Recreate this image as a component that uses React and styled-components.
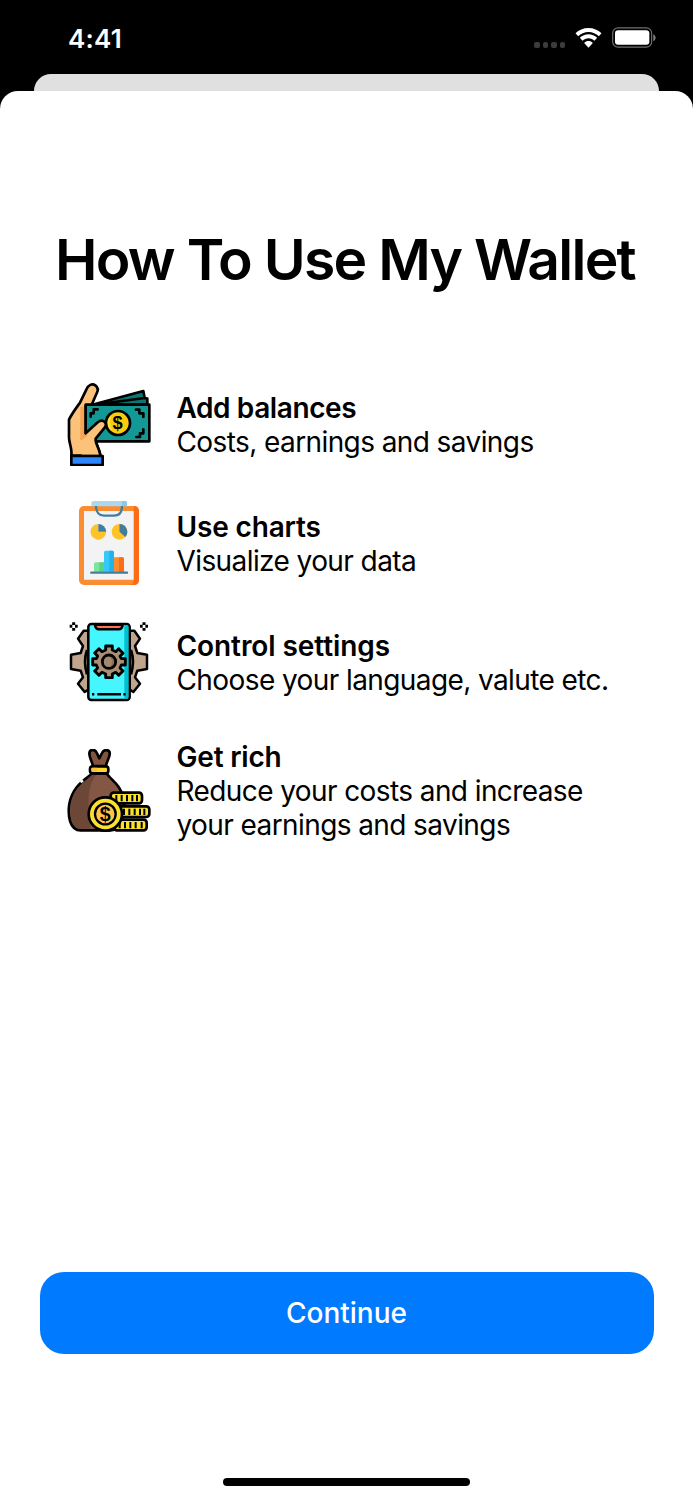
import React from "react";
import styled, { createGlobalStyle } from "styled-components";

const App = () => {
  return (
    <Screen>
      <GlobalStyle />
      <StatusBar>
        <Time>4:41</Time>
        <StatusIcons>
          <Signal>
            <span />
            <span />
            <span />
            <span />
          </Signal>
          <WifiIcon />
          <BatteryIcon />
        </StatusIcons>
      </StatusBar>
      <BackSheet />
      <Sheet>
        <Title>How To Use My Wallet</Title>
        <FeatureList>
          {features.map(({ title, lines, Icon, spacing }) => (
            <Feature key={title}>
              <Icon />
              <FeatureBody>
                <FeatureTitle $spacing={spacing}>{title}</FeatureTitle>
                {lines.map((line) => (
                  <FeatureText key={line}>{line}</FeatureText>
                ))}
              </FeatureBody>
            </Feature>
          ))}
        </FeatureList>
        <Footer>
          <ContinueButton type="button">Continue</ContinueButton>
          <HomeIndicator />
        </Footer>
      </Sheet>
    </Screen>
  );
};

const WifiIcon = () => (
  <Wifi viewBox="0 0 78 60">
    <path d="M39 0C54 0 68 6 78 16L70 25C62 17 51 12 39 12S16 17 8 25L0 16C10 6 24 0 39 0Z" />
    <path d="M39 19C49 19 58 23 65 29L57 38C52 34 46 31 39 31S26 34 21 38L13 29C20 23 29 19 39 19Z" />
    <path d="M39 39C44 39 48 41 52 45L39 59L26 45C30 41 34 39 39 39Z" />
  </Wifi>
);

const BatteryIcon = () => (
  <Battery viewBox="0 0 132 62">
    <rect x="2" y="2" width="117" height="58" rx="16" fill="none" stroke="#707070" strokeWidth="3.5" />
    <rect x="9" y="9" width="103" height="44" rx="9" fill="#fff" />
    <path d="M124 21C133 25 133 38 124 42Z" fill="#808080" />
  </Battery>
);

const MoneyIcon = () => (
  <Picture viewBox="21 20 252 252">
    <g stroke="#000" strokeWidth="8" strokeLinejoin="round" strokeLinecap="round">
      <path d="M97 88L250 47L254 68L262 70V88Z" fill="#0b7775" />
      <path d="M105 88L254 68" />
      <path d="M34 241C37 220 27 204 27 186V133C35 116 44 104 60 82L79 43C84 28 97 24 106 30C114 36 115 45 110 54L95 88V190H107C106 205 117 217 121 240Z" fill="#fdc27a" />
      <path d="M77 88H268V198H104L77 180Z" fill="#139995" />
      <path d="M92 124V114H101V102H113M228 103H238V114H250V125M229 185H240V174H250V162" fill="none" strokeWidth="8" />
      <circle cx="174" cy="143" r="36" fill="#f8ce0c" />
      <path d="M154 119A29 29 0 0 0 158 167C148 150 148 134 154 119Z" fill="#ffe14d" stroke="none" />
      <path d="M61 190L76 178L114 140C130 129 144 144 134 157L107 190C105 205 116 217 118 238H65Z" fill="#fdc27a" stroke="none" />
      <path d="M61 94H73V176L84 180L66 194H61Z" fill="#f7a552" stroke="none" />
      <path d="M77 92V174L114 140C129 129 144 143 134 157L107 190C105 205 117 216 121 239" fill="none" />
      <path d="M34 242H128V269H34Z" fill="#2c86ff" />
    </g>
    <Dollar x="173" y="162" $size={55}>$</Dollar>
  </Picture>
);

const ChartIcon = () => (
  <Picture viewBox="21 21 252 252">
    <rect x="57" y="36" width="180" height="237" rx="15" fill="#fa8d32" />
    <path d="M221 36H223C232 36 237 43 237 51V258C237 267 231 273 222 273H207C216 273 221 267 221 257Z" fill="#ff6c18" />
    <path d="M72 51H221V257H72Z" fill="#f3f3f4" />
    <path d="M94 27Q94 21 101 21H200V37H94Z" fill="#acd8ee" />
    <path d="M186 21H195Q201 21 201 27V37H186Z" fill="#8cc9e8" />
    <path d="M108 36C108 55 118 65 132 65H162C177 65 186 55 186 36" fill="none" stroke="#427d9e" strokeWidth="7" />
    <path d="M115 90A23.500 23.500 0 1 0 138.500 113.500H115Z" fill="#ffc328" />
    <path d="M115 90A23.500 23.500 0 0 1 138.500 113.500H115Z" fill="#427d9e" />
    <circle cx="178.500" cy="113.500" r="23.500" fill="#ffc328" />
    <path d="M178.500 90A23.500 23.500 0 0 1 196 129L178.500 113.500Z" fill="#427d9e" />
    <path d="M102 210Q102 205 107 205H132V233H102Z" fill="#7be59b" />
    <path d="M118 205H132V233H118Z" fill="#58d488" />
    <path d="M162 190H187Q192 190 192 195V233H162Z" fill="#fa8d32" />
    <path d="M177 190H187Q192 190 192 195V233H177Z" fill="#ff6c18" />
    <path d="M132 175Q132 170 137 170H157Q162 170 162 175V233H132Z" fill="#38c7fb" />
    <path d="M148 170H157Q162 170 162 175V233H148Z" fill="#20b3ec" />
    <path d="M94 236H201" stroke="#427d9e" strokeWidth="7" strokeLinecap="round" />
  </Picture>
);

const SettingsIcon = () => (
  <Picture viewBox="21 24 252 252">
    <g stroke="#000" strokeWidth="7.5" strokeLinejoin="round">
      <path d="M85 56H71L54 80L69 102L62 123L33 128V171L62 176L69 196L54 215L74 240L85 233Z" fill="#bfa58e" />
      <path d="M209 56H223L240 80L225 102L232 123L261 128V171L232 176L225 196L240 215L220 240L209 233Z" fill="#bfa58e" />
      <path d="M81 114C74 135 74 164 81 187M213 114C220 135 220 164 213 187" fill="none" strokeWidth="8" />
      <rect x="85" y="36" width="124" height="228" rx="9" fill="#46f6ff" />
      <path d="M193 40H202Q205 40 205 43V257Q205 260 202 260H193Z" fill="#00bfd0" stroke="none" />
      <path d="M105 38H188Q187 52 176 52H117Q106 52 105 38Z" fill="#ff7058" />
      <path d="M137 102H157V114L168 119L176 110L189 124L180 133L184 140H196V159H184L180 168L189 177L176 190L167 181L157 186V197H137V186L126 181L117 190L104 177L113 168L109 159H98V140H109L113 132L104 123L117 110L126 119L137 114Z" fill="#aa8f76" strokeWidth="8.5" />
      <circle cx="147" cy="149" r="20" fill="#917153" strokeWidth="8.5" />
      <path d="M148 134C158 138 158 160 148 164C136 165 132 159 132 149S137 133 148 134Z" fill="#a4886d" stroke="none" />
      <path d="M96 247H103M112 247H183M190 247H197" fill="none" />
      <path d="M41 31V39M41 48V56M29 43H37M45 43H53M252 31V39M252 48V56M240 43H248M256 43H264" fill="none" strokeWidth="9" />
    </g>
  </Picture>
);

const CoinStack = ({ x, y, width }) => (
  <g stroke="#000">
    <rect x={x} y={y} width={width} height="32" rx="9" fill="#f9e12e" strokeWidth="8" />
    <path
      d={[17, 33, 49, 65, width - 15].map((dx) => `M${x + dx} ${y + 7}v19`).join("")}
      strokeWidth="6"
    />
  </g>
);

const RichIcon = () => (
  <Picture viewBox="21 26 252 252">
    <g stroke="#000" strokeWidth="8" strokeLinejoin="round" strokeLinecap="round">
      <path d="M99 77C96 64 89 53 88 41C88 25 106 25 111 39L118 54L126 38C132 25 151 27 149 42C148 54 139 65 138 77Z" fill="#825440" />
      <path d="M96 99C77 119 39 134 28 190C23 224 28 270 62 270H152C185 270 198 218 192 178C184 133 151 118 140 99Z" fill="#845744" />
      <path d="M98 104C75 123 43 142 33 188C27 228 37 265 62 265H92C83 202 80 139 108 104Z" fill="#6c4738" stroke="none" />
      <rect x="90" y="78" width="55" height="21" rx="8" fill="#ffd82d" />
      <path d="M95 82H111V95H96Q92 88 95 82Z" fill="#ffc237" stroke="none" />
    </g>
    <CoinStack x={152} y={157} width={94} />
    <CoinStack x={175} y={198} width={93} />
    <CoinStack x={162} y={238} width={98} />
    <circle cx="136" cy="221" r="50" fill="#f9e12e" stroke="#000" strokeWidth="8" />
    <circle cx="136" cy="221" r="31" fill="#ffc44a" stroke="#000" strokeWidth="7" />
    <Dollar x="136" y="242" $size={59}>$</Dollar>
    <path d="M62 126L69 120" stroke="#fff" strokeWidth="7" />
  </Picture>
);

const features = [
  {
    title: "Add balances",
    lines: ["Costs, earnings and savings"],
    Icon: MoneyIcon,
    spacing: -0.4,
  },
  {
    title: "Use charts",
    lines: ["Visualize your data"],
    Icon: ChartIcon,
    spacing: -0.15,
  },
  {
    title: "Control settings",
    lines: ["Choose your language, valute etc."],
    Icon: SettingsIcon,
    spacing: -0.08,
  },
  {
    title: "Get rich",
    lines: ["Reduce your costs and increase", "your earnings and savings"],
    Icon: RichIcon,
    spacing: -0.2,
  },
];

const GlobalStyle = createGlobalStyle`
  * {
    box-sizing: border-box;
  }
  body {
    margin: 0;
    background: #000;
    font-family: Inter, "Liberation Sans", sans-serif;
  }
`;

const Screen = styled.main`
  display: flex;
  flex-direction: column;
  width: 693px;
  height: 1500px;
  overflow: hidden;
  color: #000;
  background: #000;
`;

const StatusBar = styled.header`
  display: flex;
  justify-content: space-between;
  flex: none;
  height: 74px;
  padding: 22px 37px 0 68px;
  color: #fff;
`;

const Time = styled.div`
  font-size: 26px;
  line-height: 33px;
  font-weight: 600;
  letter-spacing: 0.2px;
`;

const StatusIcons = styled.div`
  display: flex;
  align-items: flex-start;
`;

const Signal = styled.div`
  display: flex;
  gap: 3px;
  margin: 20px 10px 0 0;
  span {
    width: 5.5px;
    height: 6px;
    border-radius: 2px;
    background: #3c3c3c;
  }
`;

const Wifi = styled.svg`
  width: 27px;
  height: 20px;
  margin: 6px 10px 0 0;
  fill: #fff;
`;

const Battery = styled.svg`
  width: 44px;
  height: 21px;
  margin-top: 5px;
`;

const BackSheet = styled.div`
  flex: none;
  height: 17px;
  margin: 0 34px;
  border-radius: 17px 17px 0 0;
  background: #e0e0e0;
`;

const Sheet = styled.section`
  display: flex;
  flex: 1;
  flex-direction: column;
  padding-top: 134px;
  border-radius: 18px 18px 0 0;
  background: #fff;
`;

const Title = styled.h1`
  margin: 0;
  padding-right: 3px;
  font-size: 57px;
  line-height: 70px;
  font-weight: 600;
  letter-spacing: -1.72px;
  text-align: center;
  white-space: nowrap;
`;

const FeatureList = styled.div`
  display: flex;
  flex-direction: column;
  gap: 35px;
  padding: 87px 0 0 67px;
`;

const Feature = styled.div`
  display: flex;
  align-items: center;
  gap: 25.5px;
  min-height: 84px;
`;

const FeatureBody = styled.div`
  padding-top: 1px;
`;

const Picture = styled.svg`
  flex: none;
  width: 84px;
  height: 84px;
`;

const Dollar = styled.text`
  font-family: "Liberation Sans", sans-serif;
  font-size: ${(props) => props.$size}px;
  font-weight: 700;
  text-anchor: middle;
`;

const FeatureTitle = styled.h2`
  margin: 0;
  font-size: 28px;
  line-height: 34px;
  font-weight: 600;
  letter-spacing: ${(props) => props.$spacing}px;
`;

const FeatureText = styled.p`
  margin: 0;
  font-size: 28px;
  line-height: 34px;
  letter-spacing: -0.59px;
  white-space: nowrap;
`;

const Footer = styled.footer`
  display: flex;
  flex-direction: column;
  align-items: center;
  margin-top: auto;
  padding: 0 39px 14px;
`;

const ContinueButton = styled.button`
  width: 614px;
  height: 82px;
  padding: 0;
  border: none;
  border-radius: 24px;
  color: #fff;
  background: #007aff;
  font-family: inherit;
  font-size: 28px;
  font-weight: 500;
`;

const HomeIndicator = styled.div`
  width: 247px;
  height: 8px;
  margin-top: 124px;
  border-radius: 4px;
  background: #000;
`;

export default App;
